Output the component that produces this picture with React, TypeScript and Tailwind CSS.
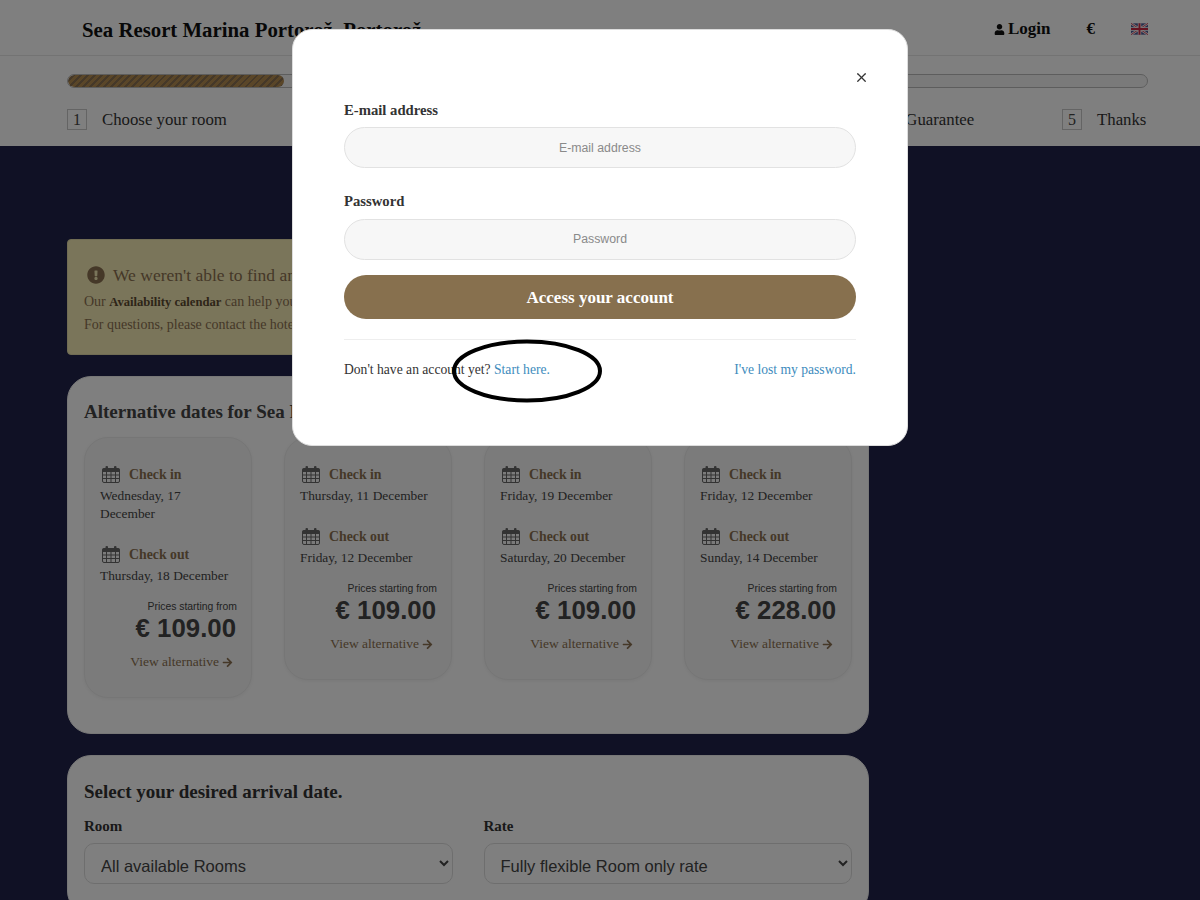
import { FaUser, FaExclamationCircle, FaArrowRight } from "react-icons/fa";
import { X } from "lucide-react";

const serif = "font-['Liberation_Serif',serif]";
const sans = "font-['Liberation_Sans',sans-serif]";

function Cal() {
  return (
    <svg width="18" height="17" viewBox="0 0 18 17" className="shrink-0 text-[#666]">
      <rect x="0.5" y="2.5" width="17" height="14" rx="1.5" fill="none" stroke="currentColor" />
      <rect x="0.5" y="2.5" width="17" height="3.5" fill="currentColor" />
      <path d="M1 9h16M1 12.5h16M4.5 6v10M9 6v10M13.5 6v10" stroke="currentColor" strokeWidth="1" fill="none" />
      <rect x="3.5" y="0" width="2.5" height="4.5" rx="1" fill="currentColor" />
      <rect x="12" y="0" width="2.5" height="4.5" rx="1" fill="currentColor" />
    </svg>
  );
}

function Flag() {
  return (
    <svg width="17" height="12" viewBox="0 0 60 40" className="opacity-90">
      <rect width="60" height="40" fill="#3b4a8c" />
      <path d="M0 0L60 40M60 0L0 40" stroke="#fff" strokeWidth="8" />
      <path d="M0 0L60 40M60 0L0 40" stroke="#c8102e" strokeWidth="3" />
      <path d="M30 0V40M0 20H60" stroke="#fff" strokeWidth="12" />
      <path d="M30 0V40M0 20H60" stroke="#c8102e" strokeWidth="7" />
    </svg>
  );
}

function Step({ n, label, cls = "" }: { n: number; label: string; cls?: string }) {
  return (
    <div className={`flex items-center gap-[15px] ${cls}`}>
      <span className="flex h-[21px] w-[20px] items-center justify-center border border-[#c8c8c8] text-[16px] text-[#444]">{n}</span>
      <span className="whitespace-nowrap pt-[1px] text-[16.8px] leading-[20px] text-[#333]">{label}</span>
    </div>
  );
}

function AltCard({ inDate, outDate, price }: { inDate: string; outDate: string; price: string }) {
  return (
    <div className="flex flex-col rounded-[24px] border border-[#ededed] bg-[#f7f7f7] px-[15px] pb-[26px] pt-[26px] shadow-[0_1px_4px_rgba(0,0,0,0.06)]">
      <div className="flex h-[20px] items-center gap-[9px] pl-[2px] text-[13.8px] font-bold leading-[18px] text-[#8a7050]">
        <Cal /> <span className="pt-[2px]">Check in</span>
      </div>
      <p className="mt-[3px] text-[13.4px] leading-[18px] text-[#444]">{inDate}</p>
      <div className="mt-[21px] flex h-[20px] items-center gap-[9px] pl-[2px] text-[13.8px] font-bold leading-[18px] text-[#8a7050]">
        <Cal /> <span className="pt-[2px]">Check out</span>
      </div>
      <p className="mt-[3px] text-[13.4px] leading-[18px] text-[#444]">{outDate}</p>
      <p className={`-mr-[1px] mt-[15px] text-right text-[10.4px] leading-[13px] text-[#444] ${sans}`}>Prices starting from</p>
      <p className={`mt-[1px] text-right text-[25.8px] font-bold leading-[29px] text-[#444] ${sans}`}>{price}</p>
      <a className="mt-[10px] flex items-center justify-end gap-[3px] pr-[3px] text-[13.5px] leading-[18px] text-[#8a7050]">
        View alternative <FaArrowRight className="text-[11px]" />
      </a>
    </div>
  );
}

export default function App() {
  return (
    <div className={`relative h-[900px] overflow-hidden bg-[#20224a] ${serif}`}>
      <header className="flex h-[56px] items-center justify-between border-b border-[#e6e6e6] bg-white pl-[82px] pr-[52px] pt-[3px]">
        <h1 className="mt-[2px] whitespace-nowrap text-[20.8px] font-bold text-[#111]">Sea Resort Marina Portorož, Portorož</h1>
        <div className="flex items-center text-[17px] font-bold text-[#111]">
          <span className="flex items-center gap-[3px]"><FaUser className="text-[11px]" /> Login</span>
          <span className="ml-[36px]">€</span>
          <span className="ml-[36px] flex"><Flag /></span>
        </div>
      </header>

      <section className="h-[90px] bg-white pl-[67px] pr-[52px] pt-[18px]">
        <div className="h-[14px] overflow-hidden rounded-full border border-[#bbb] bg-[#f5f5f5]">
          <div className="h-full w-[216px] rounded-full bg-[repeating-linear-gradient(135deg,#b48c50_0,#b48c50_3px,#8a7050_3px,#8a7050_5px)]" />
        </div>
        <div className="mt-[21px] flex justify-between">
          <Step n={1} label="Choose your room" />
          <Step n={2} label="Extras" cls="w-[190px]" />
          <Step n={3} label="Your details" cls="w-[190px]" />
          <Step n={4} label="Guarantee" />
          <Step n={5} label="Thanks" cls="w-[86px]" />
        </div>
      </section>

      <main className="ml-[67px] w-[802px] pt-[93px]">
        <div className="rounded-[4px] border border-[#e0d9a8] bg-[#f5ebb5] px-[16px] pb-[18px] pt-[23px] text-[#8a7050]">
          <div className="flex items-center gap-[8px] pl-[3px] text-[17.5px] leading-[24px]">
            <FaExclamationCircle className="text-[18px]" /> We weren't able to find any availability for your dates.
          </div>
          <p className="mt-[3px] text-[14px] leading-[23px]">Our <b className="text-[12.6px] text-[#5c4a30]">Availability calendar</b> can help you find alternative dates.</p>
          <p className="-mt-[1px] text-[14px] leading-[23px]">For questions, please contact the hotel directly.</p>
        </div>

        <div className="mt-[21px] rounded-[24px] border border-[#eee] bg-white px-[16px] pb-[35px] pt-[21px]">
          <h2 className="text-[19px] font-bold leading-[28px] text-[#444]">Alternative dates for Sea Resort Marina</h2>
          <div className="mt-[11px] grid grid-cols-4 items-start gap-[32px]">
            <AltCard inDate="Wednesday, 17 December" outDate="Thursday, 18 December" price="€ 109.00" />
            <AltCard inDate="Thursday, 11 December" outDate="Friday, 12 December" price="€ 109.00" />
            <AltCard inDate="Friday, 19 December" outDate="Saturday, 20 December" price="€ 109.00" />
            <AltCard inDate="Friday, 12 December" outDate="Sunday, 14 December" price="€ 228.00" />
          </div>
        </div>

        <div className="mt-[21px] rounded-[24px] border border-[#eee] bg-white px-[16px] pb-[30px] pt-[22px]">
          <h2 className="text-[19px] font-bold leading-[28px] text-[#333]">Select your desired arrival date.</h2>
          <div className="mt-[10px] grid grid-cols-2 gap-[31px]">
            <label className="block text-[15px] font-bold leading-[20px] text-[#333]">
              Room
              <select defaultValue="all" className={`mt-[7px] block h-[41px] w-full rounded-[10px] border border-[#ddd] bg-white pl-[12px] pr-[4px] pt-[4px] text-[16.5px] font-normal text-[#444] ${sans}`}>
                <option value="all">All available Rooms</option>
              </select>
            </label>
            <label className="block text-[15px] font-bold leading-[20px] text-[#333]">
              Rate
              <select defaultValue="flex" className={`mt-[7px] block h-[41px] w-full rounded-[10px] border border-[#ddd] bg-white pl-[12px] pr-[4px] pt-[4px] text-[16.5px] font-normal text-[#444] ${sans}`}>
                <option value="flex">Fully flexible Room only rate</option>
              </select>
            </label>
          </div>
        </div>
      </main>

      <div className="absolute inset-0 bg-black/50" />

      <div className="absolute left-[292px] top-[29px] flex h-[417px] w-[616px] flex-col rounded-[20px] border border-[#ddd] bg-white px-[51px] pt-[70px]">
        <button className="absolute right-[38px] top-[40px] text-[#333]"><X size={15} strokeWidth={2} /></button>
        <label className="text-[14.7px] font-bold leading-[20px] text-[#333]">E-mail address</label>
        <div className={`mt-[7px] flex h-[41px] items-center justify-center rounded-full border border-[#e2e2e2] bg-[#f7f7f7] pt-[1px] text-[12.3px] text-[#8a8a8a] ${sans}`}>E-mail address</div>
        <label className="mt-[23px] text-[14.7px] font-bold leading-[20px] text-[#333]">Password</label>
        <div className={`mt-[8px] flex h-[41px] items-center justify-center rounded-full border border-[#e2e2e2] bg-[#f7f7f7] text-[12.3px] text-[#8a8a8a] ${sans}`}>Password</div>
        <button className="mt-[15px] h-[44px] rounded-full bg-[#87704e] pt-[1px] text-[17px] font-bold text-white">Access your account</button>
        <hr className="mt-[20px] border-[#eeeeee]" />
        <div className="mt-[20px] flex justify-between text-[13.6px] leading-[20px] text-[#333]">
          <span>Don't have an account yet? <a className="text-[#3d8bbd]">Start here.</a></span>
          <a className="text-[#3d8bbd]">I've lost my password.</a>
        </div>
      </div>

      <svg width="152" height="66" viewBox="0 0 152 66" className="absolute left-[451px] top-[339px]">
        <ellipse cx="76" cy="32" rx="73" ry="29.5" fill="none" stroke="#000" strokeWidth="4" />
      </svg>
    </div>
  );
}
